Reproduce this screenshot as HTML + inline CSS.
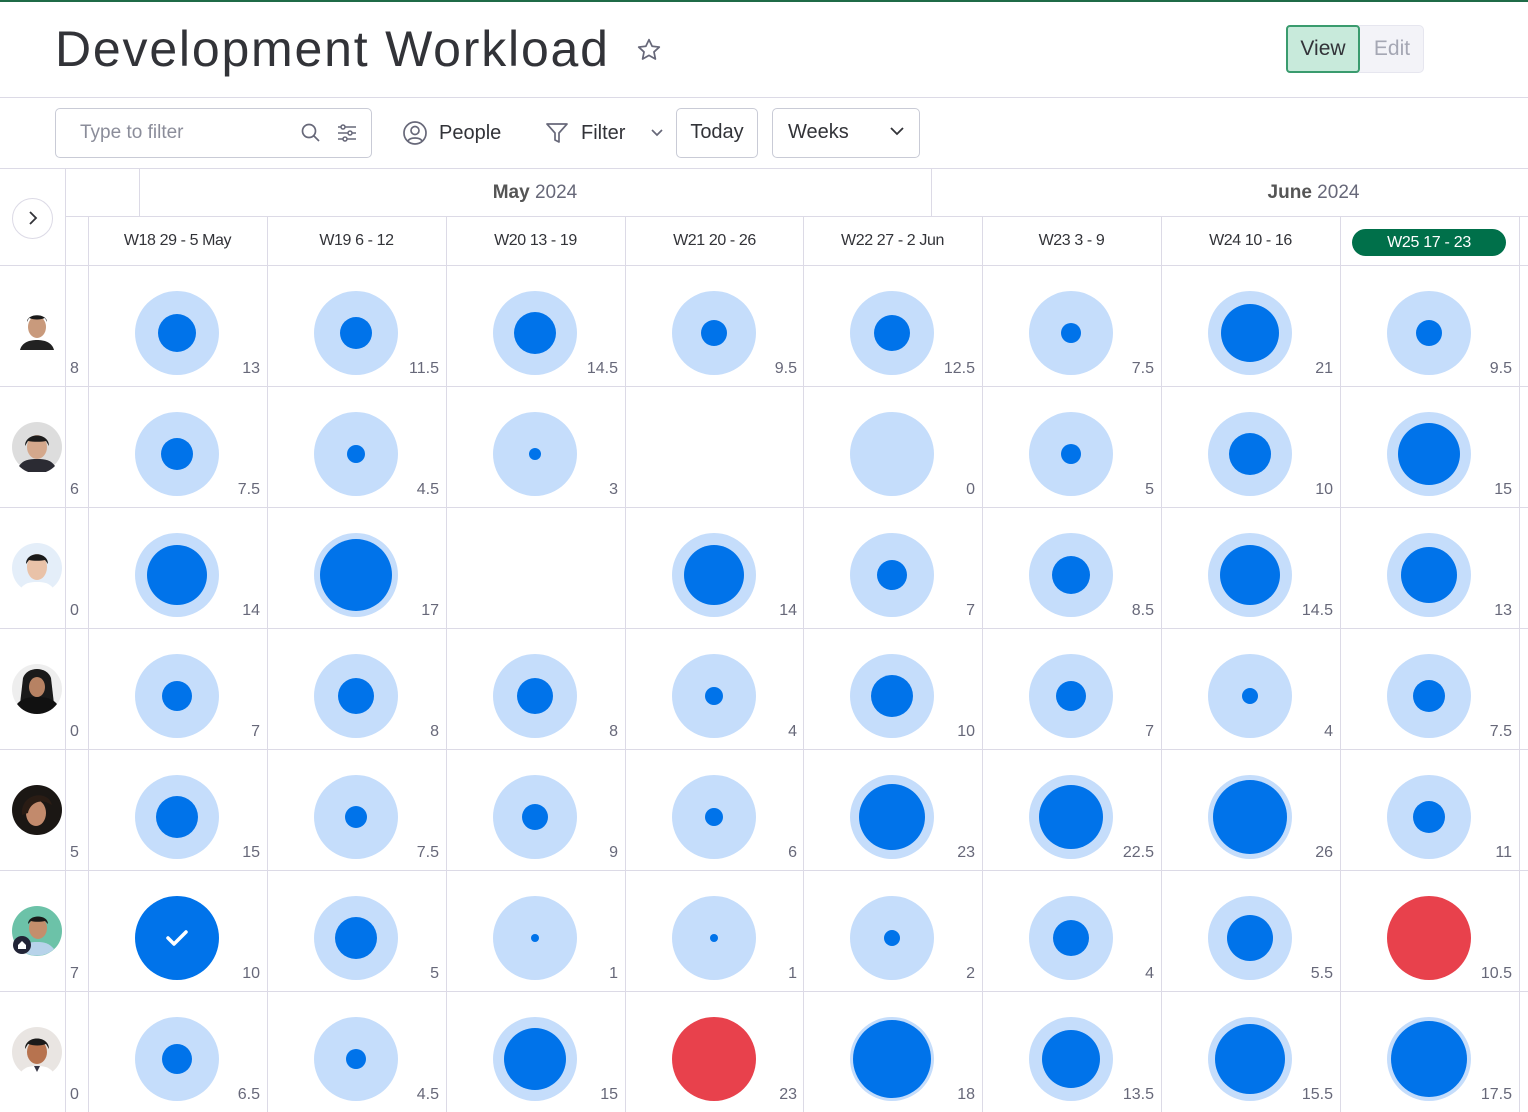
<!DOCTYPE html>
<html><head><meta charset="utf-8"><style>
*{box-sizing:border-box;margin:0;padding:0}
body{width:1528px;height:1112px;overflow:hidden;background:#fff;font-family:"Liberation Sans",sans-serif;color:#323338;position:relative}
.abs{position:absolute}
.hl{position:absolute;height:1px;background:#dcdae6;left:0;width:1528px}
.vl{position:absolute;width:1px;background:#dcdae6}
.c{position:absolute;width:179px;height:121px}
.c::before{content:"";position:absolute;left:47px;top:26px;width:84px;height:84px;border-radius:50%;background:#c5ddfb}
.c.e::before{display:none}
.c b{position:absolute;left:calc(89px - var(--d)/2);top:calc(68px - var(--d)/2);width:var(--d);height:var(--d);border-radius:50%;background:#0073ea}
.c b.r{background:#e8414c}
.c span{position:absolute;right:7px;top:95px;font-size:16px;color:#676879}
.ln{position:absolute;left:70px;font-size:16px;color:#676879}
.wk{position:absolute;top:216px;height:49px;width:179px;text-align:center;line-height:49px;font-size:16px;color:#323338;letter-spacing:-0.4px}
.av{position:absolute;left:12px;width:50px;height:50px}
</style></head><body>
<div class="abs" style="left:0;top:0;width:1528px;height:2px;background:#1f6b47"></div>
<div class="abs" style="left:55px;top:20px;font-size:50px;color:#323338;letter-spacing:1.8px;white-space:nowrap">Development Workload</div>
<svg class="abs" style="left:636px;top:37px" width="26" height="26" viewBox="0 0 24 24"><path d="M12 2.5l2.9 6 6.6.8-4.9 4.5 1.3 6.5L12 17l-5.9 3.3 1.3-6.5-4.9-4.5 6.6-.8z" fill="none" stroke="#676879" stroke-width="1.6" stroke-linejoin="round"/></svg>
<div class="abs" style="left:1286px;top:25px;width:138px;height:48px;border-radius:5px;background:#f3f3f8;border:1px solid #e6e6ef"></div>
<div class="abs" style="left:1286px;top:25px;width:74px;height:48px;border-radius:4px;background:#c8eadb;border:2px solid #3a9b6e;font-size:21px;line-height:44px;text-align:center;color:#323338">View</div>
<div class="abs" style="left:1362px;top:25px;width:60px;height:48px;font-size:21px;line-height:48px;text-align:center;color:#a5a7b4">Edit</div>
<div class="hl" style="top:97px"></div>
<div class="abs" style="left:55px;top:108px;width:317px;height:50px;border:1px solid #c9cbd6;border-radius:5px"></div>
<div class="abs" style="left:80px;top:122px;font-size:19px;color:#8b8d9a">Type to filter</div>
<svg class="abs" style="left:300px;top:122px" width="22" height="22" viewBox="0 0 22 22"><circle cx="9" cy="9" r="6.5" fill="none" stroke="#676879" stroke-width="1.7"/><path d="M14 14l5 5" stroke="#676879" stroke-width="1.7"/></svg>
<svg class="abs" style="left:336px;top:122px" width="22" height="22" viewBox="0 0 22 22" fill="none" stroke="#676879" stroke-width="1.5"><path d="M2 5h18M2 11h18M2 17h18"/><circle cx="7" cy="5" r="2" fill="#fff"/><circle cx="14" cy="11" r="2" fill="#fff"/><circle cx="9" cy="17" r="2" fill="#fff"/></svg>
<svg class="abs" style="left:402px;top:120px" width="26" height="26" viewBox="0 0 26 26" fill="none" stroke="#676879" stroke-width="1.7"><circle cx="13" cy="13" r="11"/><circle cx="13" cy="10.5" r="4"/><path d="M6 21c2-4 12-4 14 0"/></svg>
<div class="abs" style="left:439px;top:122px;font-size:20px;color:#323338">People</div>
<svg class="abs" style="left:544px;top:120px" width="26" height="26" viewBox="0 0 26 26" fill="none" stroke="#676879" stroke-width="1.7" stroke-linejoin="round"><path d="M3 4h20l-8 9v9l-4-2v-7z"/></svg>
<div class="abs" style="left:581px;top:122px;font-size:20px;color:#323338">Filter</div>
<svg class="abs" style="left:649px;top:127px" width="16" height="12" viewBox="0 0 16 12"><path d="M3 3l5 5 5-5" fill="none" stroke="#676879" stroke-width="1.7"/></svg>
<div class="abs" style="left:676px;top:108px;width:82px;height:50px;border:1px solid #c9cbd6;border-radius:5px;font-size:20px;line-height:47px;text-align:center">Today</div>
<div class="abs" style="left:772px;top:108px;width:148px;height:50px;border:1px solid #c9cbd6;border-radius:5px;font-size:20px;line-height:47px;padding-left:15px">Weeks</div>
<svg class="abs" style="left:888px;top:124px" width="18" height="14" viewBox="0 0 18 14"><path d="M3 4l6 6 6-6" fill="none" stroke="#323338" stroke-width="1.8"/></svg>
<div class="hl" style="top:168px"></div>
<div class="hl" style="top:216px;left:65px"></div>
<div class="hl" style="top:265px"></div>
<div class="hl" style="top:386px"></div>
<div class="hl" style="top:507px"></div>
<div class="hl" style="top:628px"></div>
<div class="hl" style="top:749px"></div>
<div class="hl" style="top:870px"></div>
<div class="hl" style="top:991px"></div>
<div class="vl" style="left:65px;top:168px;height:944px"></div>
<div class="vl" style="left:139px;top:168px;height:48px"></div>
<div class="vl" style="left:931px;top:168px;height:48px"></div>
<div class="vl" style="left:88px;top:216px;height:896px"></div>
<div class="vl" style="left:267px;top:216px;height:896px"></div>
<div class="vl" style="left:446px;top:216px;height:896px"></div>
<div class="vl" style="left:625px;top:216px;height:896px"></div>
<div class="vl" style="left:803px;top:216px;height:896px"></div>
<div class="vl" style="left:982px;top:216px;height:896px"></div>
<div class="vl" style="left:1161px;top:216px;height:896px"></div>
<div class="vl" style="left:1340px;top:216px;height:896px"></div>
<div class="vl" style="left:1519px;top:216px;height:896px"></div>
<div class="abs" style="left:12px;top:198px;width:41px;height:41px;border-radius:50%;border:1px solid #dcdae6;background:#fff"></div>
<svg class="abs" style="left:25px;top:210px" width="16" height="16" viewBox="0 0 16 16"><path d="M5 2l6 6-6 6" fill="none" stroke="#323338" stroke-width="1.8"/></svg>
<div class="abs" style="left:139px;top:169px;width:792px;height:48px;line-height:48px;text-align:center;font-size:19px;color:#676879"><b style="color:#555">May</b> 2024</div>
<div class="abs" style="left:931px;top:169px;width:765px;height:48px;line-height:48px;text-align:center;font-size:19px;color:#676879"><b style="color:#555">June</b> 2024</div>
<div class="wk" style="left:88px">W18 29 - 5 May</div>
<div class="wk" style="left:267px">W19 6 - 12</div>
<div class="wk" style="left:446px">W20 13 - 19</div>
<div class="wk" style="left:625px">W21 20 - 26</div>
<div class="wk" style="left:803px">W22 27 - 2 Jun</div>
<div class="wk" style="left:982px">W23 3 - 9</div>
<div class="wk" style="left:1161px">W24 10 - 16</div>
<div class="abs" style="left:1352px;top:229px;width:154px;height:27px;border-radius:14px;background:#00704a;color:#fff;font-size:16px;line-height:27px;text-align:center;letter-spacing:-0.3px">W25 17 - 23</div>
<svg class="av" style="top:300px" viewBox="0 0 50 50"><rect width="50" height="50" fill="#fff"/><path d="M8 50c2-8 10-10 17-10s15 2 17 10z" fill="#222"/><ellipse cx="25" cy="27" rx="9" ry="11" fill="#c99a7c"/><path d="M15 22c0-9 20-9 20 0l-2-4c-5 2-11 2-16 0z" fill="#1a1a1a"/></svg>
<svg class="av" style="top:422px" viewBox="0 0 50 50"><circle cx="25" cy="25" r="25" fill="#ddd"/><path d="M7 44c4-6 10-7 18-7s14 1 18 7a25 25 0 0 1-36 0z" fill="#2b2b33"/><ellipse cx="25" cy="25" rx="10" ry="12" fill="#d4a88c"/><path d="M13 24c0-14 24-14 24 0l-3-5c-5 1-12 1-18 0z" fill="#1c1c1c"/></svg>
<svg class="av" style="top:543px" viewBox="0 0 50 50"><circle cx="25" cy="25" r="25" fill="#e4eef9"/><path d="M9 45c4-5 9-6 16-6s12 1 16 6a25 25 0 0 1-32 0z" fill="#fff"/><ellipse cx="25" cy="24" rx="10" ry="13" fill="#e9c2a8"/><path d="M14 21c0-13 22-13 22 0l-3-4c-5 1-11 1-16 0z" fill="#1a1a1a"/></svg>
<svg class="av" style="top:664px" viewBox="0 0 50 50"><circle cx="25" cy="25" r="25" fill="#eee"/><path d="M11 14c4-12 24-12 28 0l3 26h-34z" fill="#1a1a1a"/><path d="M5 40c5-6 12-7 20-7s15 1 20 7a25 25 0 0 1-40 0z" fill="#111"/><ellipse cx="25" cy="23" rx="8" ry="10" fill="#b78263"/></svg>
<svg class="av" style="top:785px" viewBox="0 0 50 50"><circle cx="25" cy="25" r="25" fill="#1b1714"/><ellipse cx="24" cy="28" rx="10" ry="13" fill="#c28a6c"/><path d="M10 30c-2-22 26-26 30-10l-4-2c-8-4-18 0-20 10z" fill="#2a1c14"/></svg>
<svg class="av" style="top:906px" viewBox="0 0 50 50"><circle cx="25" cy="25" r="25" fill="#6cc2a8"/><path d="M8 43c5-6 10-7 17-7s12 1 17 7a25 25 0 0 1-34 0z" fill="#b7d3ea"/><ellipse cx="26" cy="22" rx="9" ry="11" fill="#c48e6c"/><path d="M16 18c0-10 20-10 20 0l-3-3c-5 1-10 1-14 0z" fill="#1a1a1a"/><circle cx="10" cy="39" r="9" fill="#222436"/><path d="M6 43v-4l4-4 4 4v4z" fill="#fff"/></svg>
<svg class="av" style="top:1027px" viewBox="0 0 50 50"><circle cx="25" cy="25" r="25" fill="#e9e5e2"/><path d="M9 45c4-5 9-6 16-6s12 1 16 6a25 25 0 0 1-32 0z" fill="#fff"/><path d="M22 39h6l-3 6z" fill="#334"/><ellipse cx="25" cy="25" rx="10" ry="12" fill="#b7734f"/><path d="M13 22c0-14 24-14 24 0l-3-5c-5 2-12 2-18 0z" fill="#1a1a1a"/></svg>
<div class="ln" style="top:360px">8</div>
<div class="ln" style="top:481px">6</div>
<div class="ln" style="top:602px">0</div>
<div class="ln" style="top:723px">0</div>
<div class="ln" style="top:844px">5</div>
<div class="ln" style="top:965px">7</div>
<div class="ln" style="top:1086px">0</div>
<div class="c" style="left:88px;top:265px"><b style="--d:38px"></b><span>13</span></div>
<div class="c" style="left:267px;top:265px"><b style="--d:32px"></b><span>11.5</span></div>
<div class="c" style="left:446px;top:265px"><b style="--d:42px"></b><span>14.5</span></div>
<div class="c" style="left:625px;top:265px"><b style="--d:26px"></b><span>9.5</span></div>
<div class="c" style="left:803px;top:265px"><b style="--d:36px"></b><span>12.5</span></div>
<div class="c" style="left:982px;top:265px"><b style="--d:20px"></b><span>7.5</span></div>
<div class="c" style="left:1161px;top:265px"><b style="--d:58px"></b><span>21</span></div>
<div class="c" style="left:1340px;top:265px"><b style="--d:26px"></b><span>9.5</span></div>
<div class="c" style="left:88px;top:386px"><b style="--d:32px"></b><span>7.5</span></div>
<div class="c" style="left:267px;top:386px"><b style="--d:18px"></b><span>4.5</span></div>
<div class="c" style="left:446px;top:386px"><b style="--d:12px"></b><span>3</span></div>
<div class="c" style="left:803px;top:386px"><span>0</span></div>
<div class="c" style="left:982px;top:386px"><b style="--d:20px"></b><span>5</span></div>
<div class="c" style="left:1161px;top:386px"><b style="--d:42px"></b><span>10</span></div>
<div class="c" style="left:1340px;top:386px"><b style="--d:62px"></b><span>15</span></div>
<div class="c" style="left:88px;top:507px"><b style="--d:60px"></b><span>14</span></div>
<div class="c" style="left:267px;top:507px"><b style="--d:72px"></b><span>17</span></div>
<div class="c" style="left:625px;top:507px"><b style="--d:60px"></b><span>14</span></div>
<div class="c" style="left:803px;top:507px"><b style="--d:30px"></b><span>7</span></div>
<div class="c" style="left:982px;top:507px"><b style="--d:38px"></b><span>8.5</span></div>
<div class="c" style="left:1161px;top:507px"><b style="--d:60px"></b><span>14.5</span></div>
<div class="c" style="left:1340px;top:507px"><b style="--d:56px"></b><span>13</span></div>
<div class="c" style="left:88px;top:628px"><b style="--d:30px"></b><span>7</span></div>
<div class="c" style="left:267px;top:628px"><b style="--d:36px"></b><span>8</span></div>
<div class="c" style="left:446px;top:628px"><b style="--d:36px"></b><span>8</span></div>
<div class="c" style="left:625px;top:628px"><b style="--d:18px"></b><span>4</span></div>
<div class="c" style="left:803px;top:628px"><b style="--d:42px"></b><span>10</span></div>
<div class="c" style="left:982px;top:628px"><b style="--d:30px"></b><span>7</span></div>
<div class="c" style="left:1161px;top:628px"><b style="--d:16px"></b><span>4</span></div>
<div class="c" style="left:1340px;top:628px"><b style="--d:32px"></b><span>7.5</span></div>
<div class="c" style="left:88px;top:749px"><b style="--d:42px"></b><span>15</span></div>
<div class="c" style="left:267px;top:749px"><b style="--d:22px"></b><span>7.5</span></div>
<div class="c" style="left:446px;top:749px"><b style="--d:26px"></b><span>9</span></div>
<div class="c" style="left:625px;top:749px"><b style="--d:18px"></b><span>6</span></div>
<div class="c" style="left:803px;top:749px"><b style="--d:66px"></b><span>23</span></div>
<div class="c" style="left:982px;top:749px"><b style="--d:64px"></b><span>22.5</span></div>
<div class="c" style="left:1161px;top:749px"><b style="--d:74px"></b><span>26</span></div>
<div class="c" style="left:1340px;top:749px"><b style="--d:32px"></b><span>11</span></div>
<div class="c e" style="left:88px;top:870px"><b style="--d:84px"></b><svg class="abs" style="left:77px;top:57px" width="24" height="22" viewBox="0 0 24 22"><path d="M3 11l6 6 12-12" fill="none" stroke="#fff" stroke-width="3.5" stroke-linecap="round" stroke-linejoin="round"/></svg><span>10</span></div>
<div class="c" style="left:267px;top:870px"><b style="--d:42px"></b><span>5</span></div>
<div class="c" style="left:446px;top:870px"><b style="--d:8px"></b><span>1</span></div>
<div class="c" style="left:625px;top:870px"><b style="--d:8px"></b><span>1</span></div>
<div class="c" style="left:803px;top:870px"><b style="--d:16px"></b><span>2</span></div>
<div class="c" style="left:982px;top:870px"><b style="--d:36px"></b><span>4</span></div>
<div class="c" style="left:1161px;top:870px"><b style="--d:46px"></b><span>5.5</span></div>
<div class="c e" style="left:1340px;top:870px"><b class="r" style="--d:84px"></b><span>10.5</span></div>
<div class="c" style="left:88px;top:991px"><b style="--d:30px"></b><span>6.5</span></div>
<div class="c" style="left:267px;top:991px"><b style="--d:20px"></b><span>4.5</span></div>
<div class="c" style="left:446px;top:991px"><b style="--d:62px"></b><span>15</span></div>
<div class="c e" style="left:625px;top:991px"><b class="r" style="--d:84px"></b><span>23</span></div>
<div class="c" style="left:803px;top:991px"><b style="--d:78px"></b><span>18</span></div>
<div class="c" style="left:982px;top:991px"><b style="--d:58px"></b><span>13.5</span></div>
<div class="c" style="left:1161px;top:991px"><b style="--d:70px"></b><span>15.5</span></div>
<div class="c" style="left:1340px;top:991px"><b style="--d:76px"></b><span>17.5</span></div>
</body></html>
